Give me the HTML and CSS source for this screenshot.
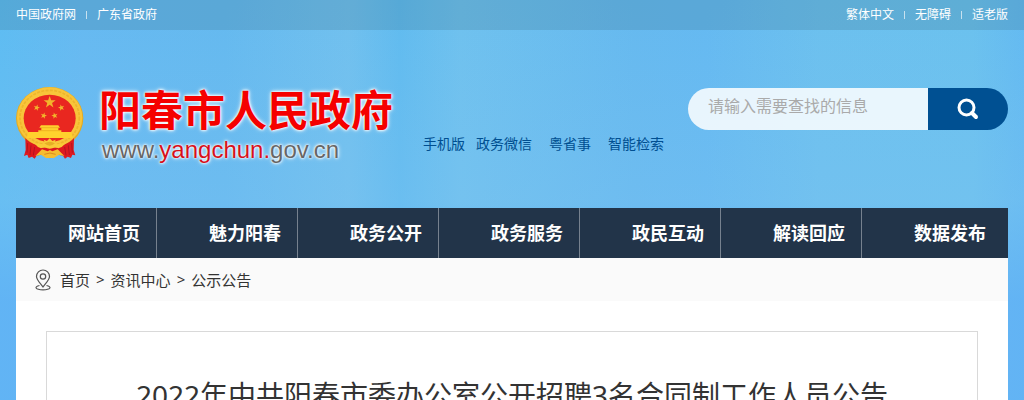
FILE: index.html
```html
<!DOCTYPE html>
<html lang="zh-CN">
<head>
<meta charset="UTF-8">
<meta name="viewport" content="width=device-width, initial-scale=1">
<title>2022年中共阳春市委办公室公开招聘3名合同制工作人员公告</title>
<link rel="stylesheet" href="styles.css">
</head>
<body>

<div class="topbar">
  <div class="top-links">
    <a href="#">中国政府网</a>
    <a href="#">广东省政府</a>
  </div>
  <div class="top-links">
    <a href="#">繁体中文</a>
    <a href="#">无障碍</a>
    <a href="#">适老版</a>
  </div>
</div>

<header class="header">
  <a class="logo" href="#">
    <svg class="emblem" viewBox="48 36 204 216" aria-hidden="true">
      <defs>
        <polygon id="star" points="0,-10 2.4,-3.2 9.5,-3.1 3.8,1.2 5.9,8.1 0,4 -5.9,8.1 -3.8,1.2 -9.5,-3.1 -2.4,-3.2"/>
      </defs>
      <ellipse cx="149" cy="130" rx="101" ry="94" fill="#e3aa22"/>
      <ellipse cx="149" cy="128" rx="98" ry="91" fill="#f8c53a"/>
      <ellipse cx="149" cy="128" rx="89" ry="82" fill="none" stroke="#eeb52b" stroke-width="5" stroke-dasharray="9 4"/>
      <ellipse cx="149" cy="130" rx="78" ry="71" fill="#e92720"/>
      <g fill="#f2b52b">
        <use href="#star" transform="translate(149 82) scale(1.9)"/>
        <use href="#star" transform="translate(110 98) rotate(15)"/>
        <use href="#star" transform="translate(184 98) rotate(-15)"/>
        <use href="#star" transform="translate(131 122) rotate(15)"/>
        <use href="#star" transform="translate(164 122) rotate(-15)"/>
      </g>
      <path d="M123 151 H175 L180 158 H175 V166 H184 V171 H214 L219 189 H80 L85 171 H115 V166 H124 V158 H118Z" fill="#ffd12d"/>
      <path d="M121 158 H177 M117 167 H182" stroke="#e9a51b" stroke-width="2"/>
      <!-- ribbons -->
      <path d="M76 189 Q89 205 112 211 L128 214 L104 251 L96 245 L86 249 L82 239 L72 243 L77 225Z" fill="#de191f"/>
      <path d="M222 189 Q209 205 186 211 L170 214 L195 251 L203 245 L213 249 L217 239 L226 241 L221 225Z" fill="#de191f"/>
      <path d="M83 204 L81 233 M93 211 L90 240 M104 216 L100 241 M215 204 L217 233 M205 211 L208 240 M194 216 L198 241" fill="none" stroke="#b31320" stroke-width="3"/>
      <path d="M119 218 H179 L190 242 L163 237 L150 250 L136 237 L108 242Z" fill="#dc171e"/>
      <path d="M106 243 L126 223 L143 229 L150 225 L157 229 L173 223 L193 243 L177 239 L162 249 H138 L123 239Z" fill="#f5bd2f"/>
      <path d="M105 207 Q116 204 127 208 L134 202 L131 194 L141 198 L149 190 L157 198 L167 194 L164 202 L172 208 Q184 204 195 207 Q188 216 175 220 L165 216 Q149 226 134 216 L123 220 Q111 216 105 207Z" fill="#f9ca38"/>
      <path d="M133 205 Q149 196 165 205 Q149 219 133 205Z" fill="#e5ae25"/>
      <path d="M133 238 Q150 230 167 238" stroke="#dc8c1d" stroke-width="3" fill="none"/>
    </svg>
    <span class="logo-text">
      <strong>阳春市人民政府</strong>
      <span class="domain">www.<em>yangchun.</em>gov.cn</span>
    </span>
  </a>

  <nav class="quick-links" aria-label="快捷入口">
    <a href="#">手机版</a>
    <a class="wechat" href="#">政务微信</a>
    <a href="#">粤省事</a>
    <a href="#">智能检索</a>
  </nav>

  <form class="search">
    <input type="text" placeholder="请输入需要查找的信息" aria-label="请输入需要查找的信息">
    <button type="submit" aria-label="搜索">
      <svg width="22" height="22" viewBox="0 0 22 22" aria-hidden="true">
        <circle cx="9.500" cy="9.500" r="7.500" fill="none" stroke="#fff" stroke-width="3"/>
        <path d="M15 15 L19 19" stroke="#fff" stroke-width="4" stroke-linecap="round"/>
      </svg>
    </button>
  </form>
</header>

<div class="wrap">
  <nav class="main-nav">
    <a href="#">网站首页</a>
    <a href="#">魅力阳春</a>
    <a href="#">政务公开</a>
    <a href="#">政务服务</a>
    <a href="#">政民互动</a>
    <a href="#">解读回应</a>
    <a href="#">数据发布</a>
  </nav>

  <div class="crumbs">
    <svg width="16" height="22" viewBox="0 0 16 22" fill="none" stroke="#555" stroke-width="1.200" aria-hidden="true">
      <path d="M8 18 C6 15 1.500 11 1.500 7.500 A6.500 6.500 0 0 1 14.500 7.500 C14.500 11 10 15 8 18Z"/>
      <circle cx="8" cy="7.500" r="2.700"/>
      <path d="M4.500 16.500 C-1 17.500 0 20.800 8 20.800 C16 20.800 17 17.500 11.500 16.500"/>
    </svg>
    <nav class="crumb-links" aria-label="当前位置">
      <a href="#">首页</a>
      <span>&gt;</span>
      <a href="#">资讯中心</a>
      <span>&gt;</span>
      <a href="#">公示公告</a>
    </nav>
  </div>

  <main class="article">
    <h1>2022年中共阳春市委办公室公开招聘3名合同制工作人员公告</h1>
  </main>
</div>

</body>
</html>
```

FILE: styles.css
```css
* {
  box-sizing: border-box;
}
body {
  margin: 0;
  font-family: "Noto Sans", "Noto Sans CJK SC", sans-serif;
  color: #333;
  background:
    linear-gradient(180deg, rgba(98,184,240,0) 0, rgba(130,196,242,0.3) 200px, rgba(98,178,245,0.8) 300px),
    linear-gradient(90deg, #5dbcf2 0, #65b9f1 8%, #64b9ef 22%, #70c0ee 34%, #60bbef 39%, #6ec1ee 45%, #65b9ef 62%, #64b9f1 69%, #6bc0ee 80%, #6ac1ee 95%, #63baf1 100%);
}
a {
  color: inherit;
  text-decoration: none;
}

/* top bar */
.topbar {
  display: flex;
  justify-content: space-between;
  height: 30px;
  padding: 0 16px;
  background: rgba(51, 102, 119, 0.2);
  color: #fff;
  font-size: 12px;
  line-height: 30px;
}
.top-links {
  display: flex;
  align-items: center;
}
.top-links a + a::before {
  content: "";
  display: inline-block;
  width: 1px;
  height: 8px;
  margin: 0 10px;
  background: #c7e1ef;
}

/* header */
.header {
  display: flex;
  align-items: flex-start;
  padding: 57px 16px 0;
  min-height: 178px;
}
.logo {
  display: flex;
  gap: 15px;
}
.emblem {
  width: 68px;
  height: 72px;
}
.logo-text {
  display: flex;
  flex-direction: column;
  white-space: nowrap;
  text-shadow: 0 0 2px #fff, 0 0 3px #fff, 0 0 5px #fff;
}
.logo-text strong {
  color: #f50000;
  font-size: 42px;
  line-height: 46px;
}
.domain {
  padding-left: 3px;
  color: #666;
  font-family: "Liberation Sans", Arial, sans-serif;
  font-size: 24px;
  line-height: 34px;
}
.domain em {
  color: #d7101b;
  font-style: normal;
}
.quick-links {
  display: flex;
  gap: 17px;
  margin: 47px 0 0 30px;
  color: #004f91;
  font-size: 14px;
  line-height: 20px;
  white-space: nowrap;
}
.quick-links .wechat {
  margin-left: -6px;
}
.search {
  display: flex;
  width: 320px;
  height: 42px;
  margin: 1px 0 0 auto;
  border-radius: 21px;
  overflow: hidden;
}
.search input {
  flex: 1;
  min-width: 0;
  padding: 0 20px 6px;
  border: 0;
  outline: 0;
  background: rgba(255, 255, 255, 0.85);
  font: inherit;
  font-size: 16px;
}
.search input::placeholder {
  color: #aaa;
}
.search button {
  display: flex;
  align-items: center;
  justify-content: center;
  width: 80px;
  padding: 0;
  border: 0;
  background: #005092;
  cursor: pointer;
}

/* main column */
.wrap {
  margin: 0 16px;
  padding-bottom: 30px;
  background: #fff;
}
.main-nav {
  display: flex;
  background: #223449;
  color: #fff;
  font-size: 18px;
  font-weight: bold;
  line-height: 50px;
  white-space: nowrap;
}
.main-nav a {
  padding: 0 16px 0 52px;
  border-right: 1px solid #76818e;
}
.main-nav a:last-child {
  flex: 1;
  border-right: 0;
}
.main-nav a:hover {
  background: #005092;
}
.crumbs {
  display: flex;
  align-items: center;
  gap: 9px;
  height: 43px;
  margin-bottom: 30px;
  padding: 0 19px;
  background: #fafafa;
  font-size: 15px;
}
.crumb-links {
  display: flex;
  gap: 6px;
}
.article {
  margin: 0 30px;
  border: 1px solid #d9d9d9;
  padding: 38px 30px;
}
.article h1 {
  margin: 0;
  font-size: 28px;
  font-weight: normal;
  line-height: 50px;
  text-align: center;
}
```
